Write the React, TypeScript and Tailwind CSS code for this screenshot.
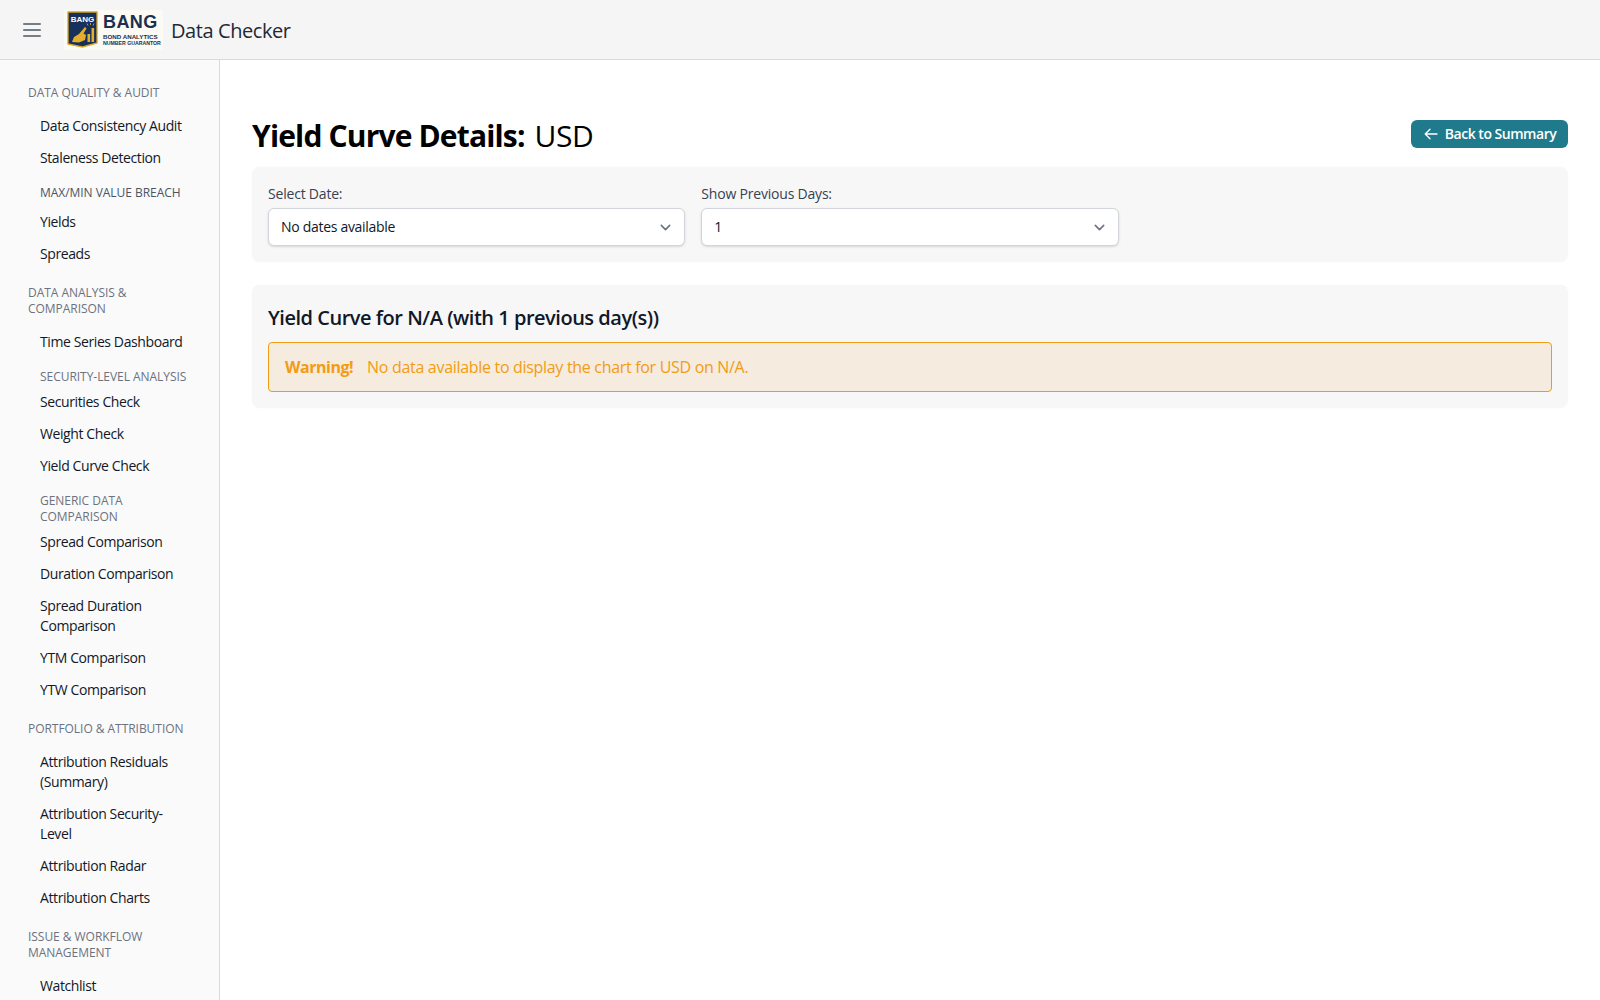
import { FC } from 'react'

type NavEntry =
  | { kind: 'section'; label: string }
  | { kind: 'sub'; label: string; dark?: boolean }
  | { kind: 'link'; label: string }

const nav: NavEntry[] = [
  { kind: 'section', label: 'Data Quality & Audit' },
  { kind: 'link', label: 'Data Consistency Audit' },
  { kind: 'link', label: 'Staleness Detection' },
  { kind: 'sub', label: 'Max/Min Value Breach', dark: true },
  { kind: 'link', label: 'Yields' },
  { kind: 'link', label: 'Spreads' },
  { kind: 'section', label: 'Data Analysis & Comparison' },
  { kind: 'link', label: 'Time Series Dashboard' },
  { kind: 'sub', label: 'Security-Level Analysis' },
  { kind: 'link', label: 'Securities Check' },
  { kind: 'link', label: 'Weight Check' },
  { kind: 'link', label: 'Yield Curve Check' },
  { kind: 'sub', label: 'Generic Data Comparison' },
  { kind: 'link', label: 'Spread Comparison' },
  { kind: 'link', label: 'Duration Comparison' },
  { kind: 'link', label: 'Spread Duration Comparison' },
  { kind: 'link', label: 'YTM Comparison' },
  { kind: 'link', label: 'YTW Comparison' },
  { kind: 'section', label: 'Portfolio & Attribution' },
  { kind: 'link', label: 'Attribution Residuals (Summary)' },
  { kind: 'link', label: 'Attribution Security-Level' },
  { kind: 'link', label: 'Attribution Radar' },
  { kind: 'link', label: 'Attribution Charts' },
  { kind: 'section', label: 'Issue & Workflow Management' },
  { kind: 'link', label: 'Watchlist' },
]

const Logo: FC = () => (
  <div className="flex h-10 w-[99px] items-center bg-[#fbfaf4] pl-[3px]">
    <svg width="31" height="37" viewBox="0 0 31 37" className="shrink-0" aria-hidden="true">
      <path d="M1 1H30V32L15.5 36L1 33Z" fill="#17315a" stroke="#d9a520" strokeWidth="1.3" />
      <text x="15.5" y="10.5" textAnchor="middle" fontSize="8" fontWeight="700" fill="#fff" fontFamily="Liberation Sans, sans-serif">BANG</text>
      {/* hand pointing up to the bars */}
      <path d="M5 31 L7 26 L12 23 L18 16 L19.5 17.5 L16.5 22.5 L19 24 L18 29 L12 31.5Z" fill="#e4ad2d" />
      <rect x="20.5" y="23" width="2.6" height="8" fill="#e4ad2d" />
      <rect x="24.5" y="17" width="2.6" height="14" fill="#e4ad2d" />
      <path d="M21 14.5L20 12.5M23.5 14L23.5 12M26 14.5L27 12.5" stroke="#e4ad2d" strokeWidth="0.8" />
    </svg>
    <div className="ml-[5px] flex flex-col font-['Liberation_Sans',sans-serif] font-bold whitespace-nowrap text-[#1b2f4f]">
      <span className="text-[18px] leading-[18px] tracking-[0.4px]">BANG</span>
      <span className="mt-[2px] text-[6.2px] leading-[7px]">BOND ANALYTICS</span>
      <span className="text-[5.2px] leading-[6px]">NUMBER GUARANTOR</span>
    </div>
  </div>
)

const Chevron: FC = () => (
  <svg width="21" height="21" viewBox="0 0 20 20" fill="none" aria-hidden="true">
    <path d="M6 8l4 4 4-4" stroke="#6b7280" strokeWidth="1.5" strokeLinecap="round" strokeLinejoin="round" />
  </svg>
)

const SelectField: FC<{ label: string; value: string }> = ({ label, value }) => (
  <div>
    <label className="mb-1 block text-sm leading-5 font-medium tracking-[-0.2px] text-[#374151]">{label}</label>
    <div className="flex h-[38px] items-center justify-between rounded-md border border-[#d1d5db] bg-white pr-2 pl-3 text-sm tracking-[-0.3px] text-[#111827] shadow-sm">
      <span>{value}</span>
      <Chevron />
    </div>
  </div>
)

const Sidebar: FC = () => (
  <aside className="w-[220px] shrink-0 overflow-hidden border-r border-[#d9d9d9] bg-[#fafafa] pt-[25px] pr-7 pl-7">
    {nav.map((item, i) => {
      if (item.kind === 'section') {
        return (
          <div
            key={item.label}
            className="mt-[15px] mb-[9px] text-xs leading-4 font-medium tracking-[-0.04px] text-[#6b7280] uppercase first:mt-0"
          >
            {item.label}
          </div>
        )
      }
      if (item.kind === 'sub') {
        return (
          <div
            key={item.label}
            className={
              item.dark
                ? 'mt-[11px] mb-[5px] pl-3 text-xs leading-4 font-medium tracking-[-0.04px] text-[#4b5563] uppercase'
                : 'mt-[11px] mb-[1px] pl-3 text-xs leading-4 font-medium tracking-[-0.04px] text-[#6b7280] uppercase'
            }
          >
            {item.label}
          </div>
        )
      }
      return (
        <a key={i} className="block py-[6px] pl-3 text-sm leading-5 tracking-[-0.4px] text-[#111827]">
          {item.label}
        </a>
      )
    })}
  </aside>
)

export default function App() {
  return (
    <div className="flex h-[1000px] flex-col overflow-hidden bg-white font-['Open_Sans',sans-serif]">
      {/* Top bar */}
      <header className="flex h-[60px] shrink-0 items-center border-b border-[#d9d9d9] bg-[#f5f5f5]">
        <button className="ml-[23px]">
          <svg width="18" height="14" viewBox="0 0 18 14" fill="none" className="block" aria-hidden="true">
            <path d="M0.8 1H17.2M0.8 7H17.2M0.8 13H17.2" stroke="#4b5563" strokeWidth="1.6" strokeLinecap="round" />
          </svg>
        </button>
        <div className="ml-[23px]">
          <Logo />
        </div>
        <span className="mt-[2px] ml-[8px] text-xl leading-7 font-medium tracking-[-0.42px] text-[#1f2937]">Data Checker</span>
      </header>

      <div className="flex min-h-0 flex-1">
        <Sidebar />

        <main className="flex-1 px-8 pt-[58px]">
          <div className="mb-[13px] flex items-start justify-between">
            <h1 className="text-3xl leading-9 font-bold tracking-[-0.84px] text-black">
              Yield Curve Details: <span className="ml-[3px] font-normal tracking-[-0.48px]">USD</span>
            </h1>
            <a className="mt-[2px] flex h-7 w-[157px] items-center justify-center gap-[6px] rounded-md bg-[#1f7a8c] text-sm font-semibold tracking-[-0.48px] text-white">
              <svg width="16" height="16" viewBox="0 0 16 16" fill="none" aria-hidden="true">
                <path d="M14 8H2.5M7 3.2L2.2 8L7 12.8" stroke="#fff" strokeWidth="1.3" strokeLinecap="round" strokeLinejoin="round" />
              </svg>
              Back to Summary
            </a>
          </div>

          {/* Filters */}
          <section className="mb-[23px] rounded-lg bg-[#f7f7f7] px-4 pt-[17px] pb-4 shadow-[0_0_2px_rgba(0,0,0,0.04)]">
            <div className="grid grid-cols-3 gap-4">
              <SelectField label="Select Date:" value="No dates available" />
              <SelectField label="Show Previous Days:" value="1" />
            </div>
          </section>

          {/* Chart card */}
          <section className="rounded-lg bg-[#f7f7f7] px-4 pt-[19px] pb-4 shadow-[0_0_2px_rgba(0,0,0,0.04)]">
            <h2 className="mb-[10px] text-xl leading-7 font-semibold tracking-[-0.48px] text-[#111827]">
              Yield Curve for N/A (with 1 previous day(s))
            </h2>
            <div className="flex h-[50px] items-center rounded border border-[#f39c12] bg-[#f5ebdf] px-4 text-base text-[#f39c12]">
              <strong className="font-bold tracking-[-0.48px]">Warning!</strong>
              <span className="ml-[14px] tracking-[-0.31px]">No data available to display the chart for USD on N/A.</span>
            </div>
          </section>
        </main>
      </div>
    </div>
  )
}
